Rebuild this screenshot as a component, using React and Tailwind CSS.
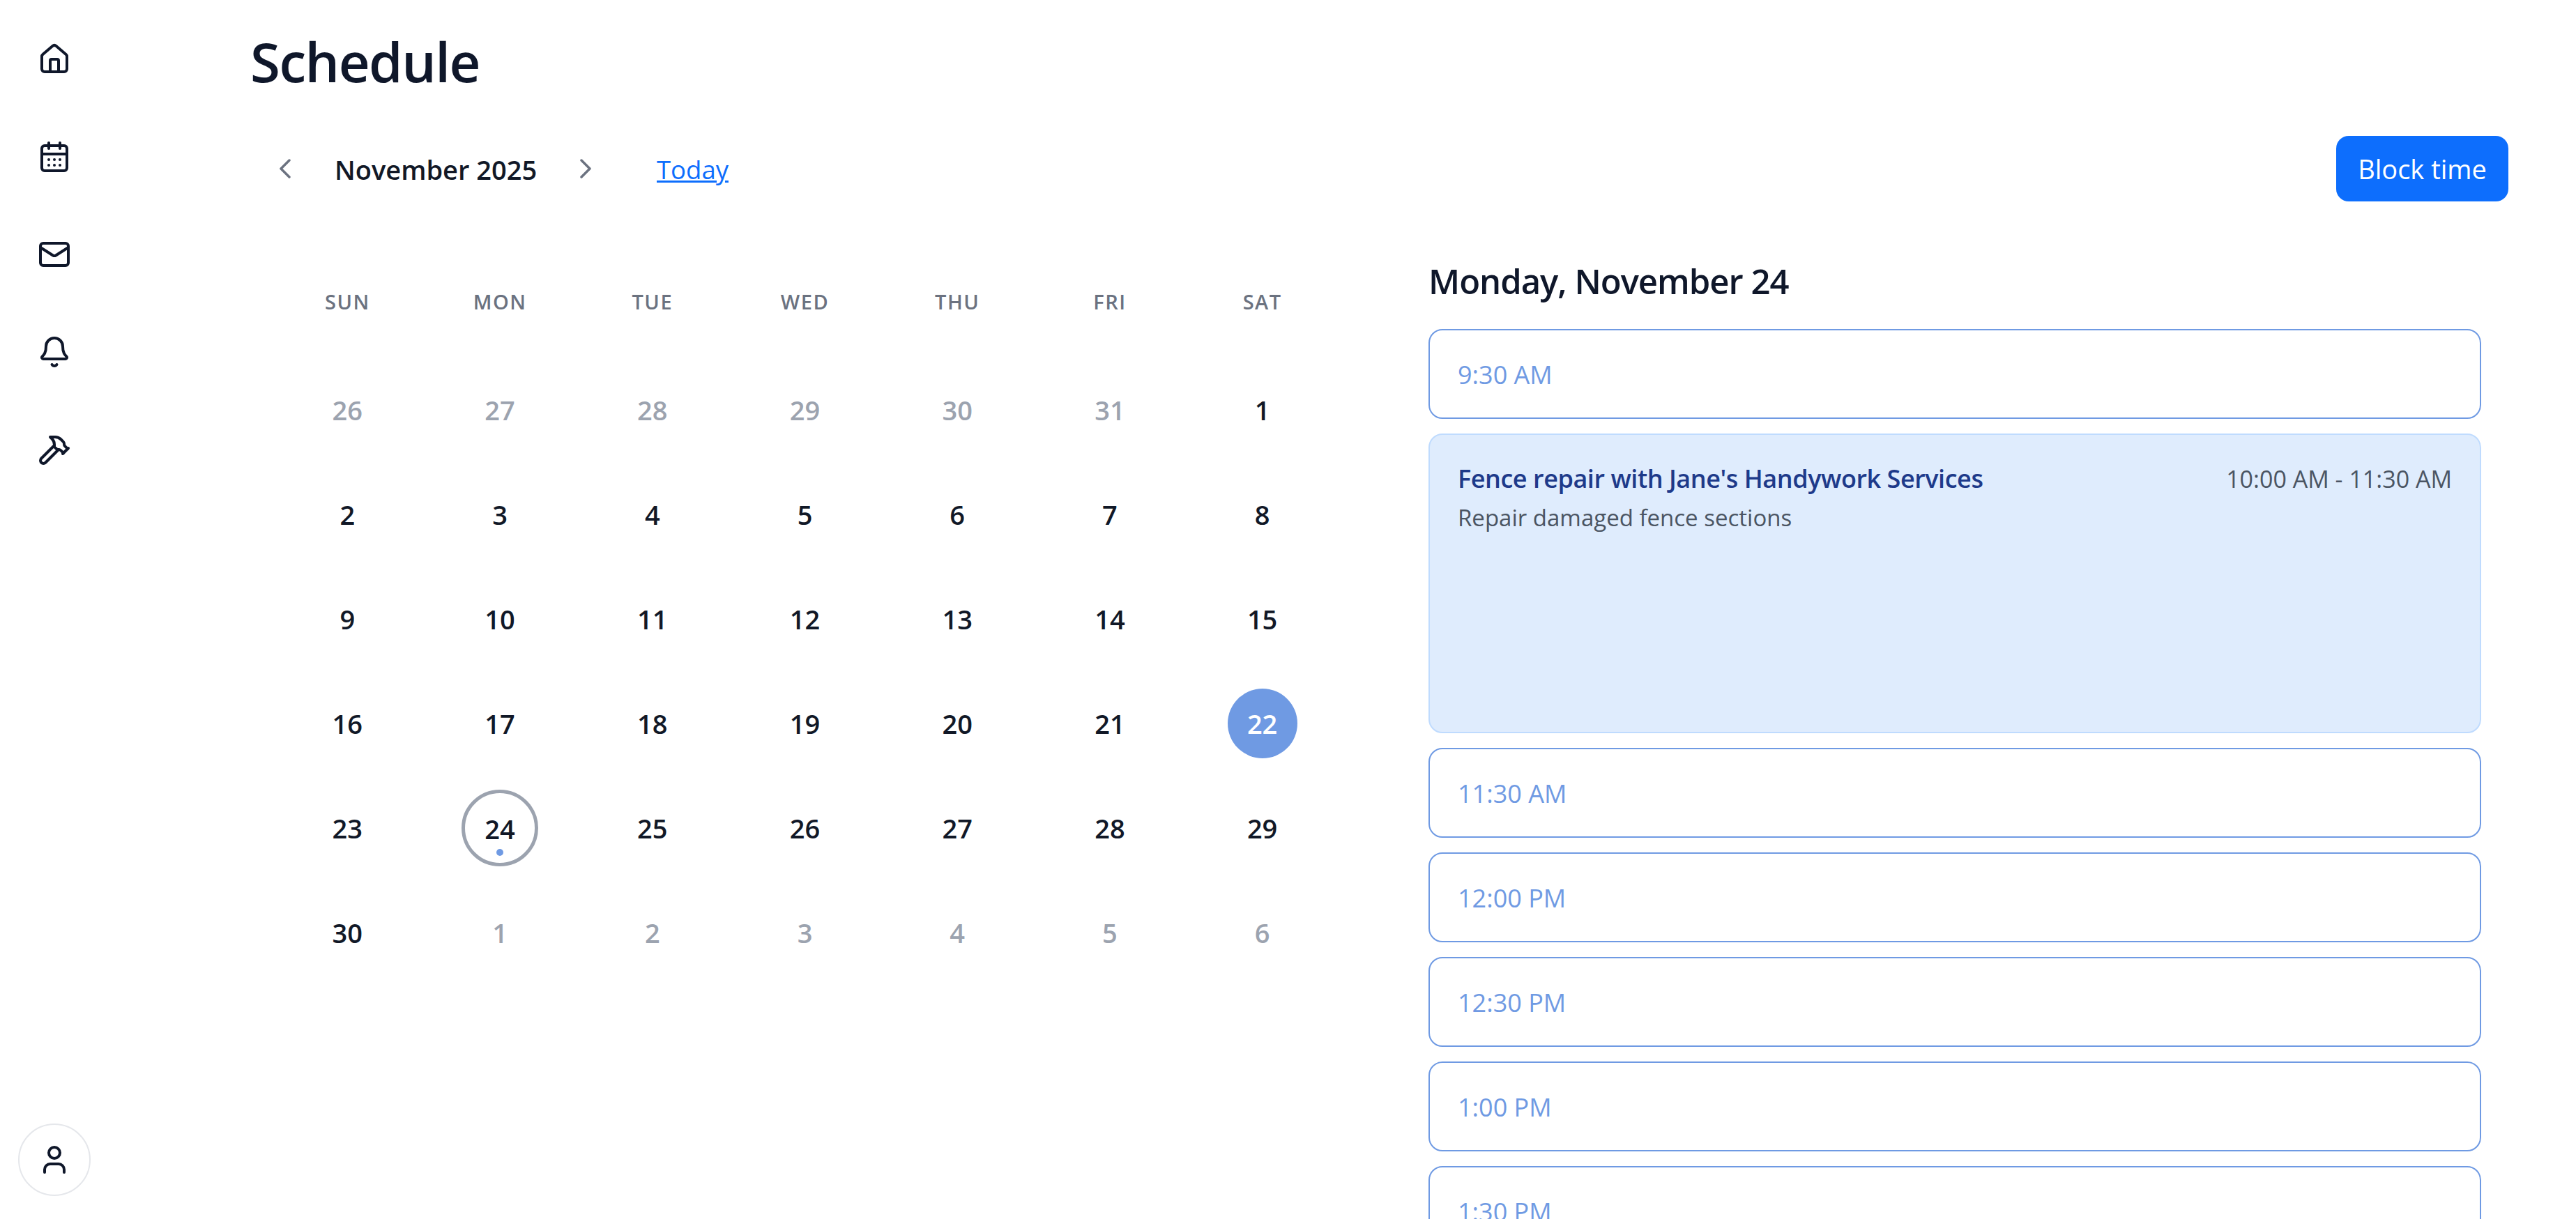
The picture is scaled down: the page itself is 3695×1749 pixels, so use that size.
import { Bell, CalendarDays, ChevronLeft, ChevronRight, Hammer, House, Mail, User } from 'lucide-react'

const navIcons = [House, CalendarDays, Mail, Bell, Hammer]
const weekdays = ['SUN', 'MON', 'TUE', 'WED', 'THU', 'FRI', 'SAT']

const days = [
  [26, 27, 28, 29, 30, 31].map((d) => ({ d, muted: true })),
  [{ d: 1 }],
  Array.from({ length: 28 }, (_, i) => ({ d: i + 2 })),
  [{ d: 30 }],
  [1, 2, 3, 4, 5, 6].map((d) => ({ d, muted: true })),
].flat()

const slotsAfter = ['11:30 AM', '12:00 PM', '12:30 PM', '1:00 PM', '1:30 PM']

function Day({ d, muted }) {
  if (!muted && d === 22) {
    return (
      <div className="flex h-[150px] items-center justify-center">
        <span className="flex size-[100px] items-center justify-center rounded-full bg-[#6f9ae3] text-[38px] font-semibold text-white">
          {d}
        </span>
      </div>
    )
  }
  if (!muted && d === 24) {
    return (
      <div className="flex h-[150px] items-center justify-center">
        <span className="relative flex size-[110px] items-center justify-center rounded-full border-[5px] border-[#9ca3af] pt-[3px] text-[38px] font-semibold text-[#111827]">
          {d}
          <span className="absolute bottom-[10px] left-1/2 size-[10px] -translate-x-1/2 rounded-full bg-[#6f9ae3]" />
        </span>
      </div>
    )
  }
  return (
    <div
      className={`flex h-[150px] items-center justify-center text-[38px] font-semibold ${
        muted ? 'text-[#9ca3af]' : 'text-[#111827]'
      }`}
    >
      {d}
    </div>
  )
}

function Slot({ label }) {
  return (
    <div className="flex h-[129px] items-center rounded-[20px] border-2 border-[#6f9ae3] px-[40px] pt-[2px] text-[36px] text-[#6f9ae3]">
      {label}
    </div>
  )
}

export default function App() {
  return (
    <div className="flex h-screen overflow-hidden bg-white font-['Open_Sans',sans-serif] text-[#111827]">
      <aside className="flex w-[156px] shrink-0 flex-col items-center justify-between pt-[61px] pb-[33px]">
        <div className="flex flex-col gap-[92px]">
          {navIcons.map((Icon, i) => (
            <Icon key={i} size={48} strokeWidth={2} className="text-[#0f172a]" />
          ))}
        </div>
        <button className="flex size-[104px] items-center justify-center rounded-full border-2 border-[#e5e7eb]">
          <User size={48} strokeWidth={2} className="text-[#0f172a]" />
        </button>
      </aside>

      <main className="min-w-0 flex-1 pt-[34px] pr-[97px] pl-[205px]">
        <h1 className="mb-[53px] -ml-[2px] h-[108px] text-[78px] leading-[108px] font-semibold tracking-[-1.5px] text-[#0f172a]">Schedule</h1>

        <div className="flex h-[94px] items-center pl-[24px]">
          <ChevronLeft size={48} strokeWidth={1.75} className="text-[#6b7280]" />
          <span className="ml-[47px] w-[289px] pt-[3px] text-[38px] font-semibold whitespace-nowrap">November 2025</span>
          <ChevronRight size={48} strokeWidth={1.75} className="ml-[47px] text-[#6b7280]" />
          <a className="ml-[78px] pt-[3px] text-[36.5px] text-[#0d6efd] underline">Today</a>
          <button className="ml-auto h-[94px] w-[247px] rounded-[18px] bg-[#0d6efd] text-[38px] text-white">
            Block time
          </button>
        </div>

        <div className="mt-[79px] flex gap-[129px] pr-[39px]">
          <section className="ml-[28px] w-[1531px] shrink-0 pt-[43px]">
            <div className="mb-[62px] grid h-[40px] grid-cols-7 items-center">
              {weekdays.map((w) => (
                <div key={w} className="text-center text-[29px] font-semibold tracking-[1.5px] text-[#6b7280]">
                  {w}
                </div>
              ))}
            </div>
            <div className="grid grid-cols-7">
              {days.map((day, i) => (
                <Day key={i} {...day} />
              ))}
            </div>
          </section>

          <section className="min-w-0 flex-1">
            <h2 className="mb-[34px] h-[70px] text-[49px] leading-[70px] font-semibold tracking-[-1px] whitespace-nowrap text-[#0f172a]">
              Monday, November 24
            </h2>
            <div className="flex flex-col gap-[21px]">
              <Slot label="9:30 AM" />
              <div className="h-[430px] rounded-[20px] border-2 border-[#bfdbfe] bg-[#dfecfd] px-[40px] pt-[36px]">
                <div className="flex items-center justify-between">
                  <span className="text-[36px] font-semibold tracking-[-0.45px] text-[#1e3a8a]">Fence repair with Jane's Handywork Services</span>
                  <span className="text-[34px] text-[#4b5563]">10:00 AM - 11:30 AM</span>
                </div>
                <p className="mt-[4px] text-[33px] text-[#4b5563]">Repair damaged fence sections</p>
              </div>
              {slotsAfter.map((s) => (
                <Slot key={s} label={s} />
              ))}
            </div>
          </section>
        </div>
      </main>
    </div>
  )
}
